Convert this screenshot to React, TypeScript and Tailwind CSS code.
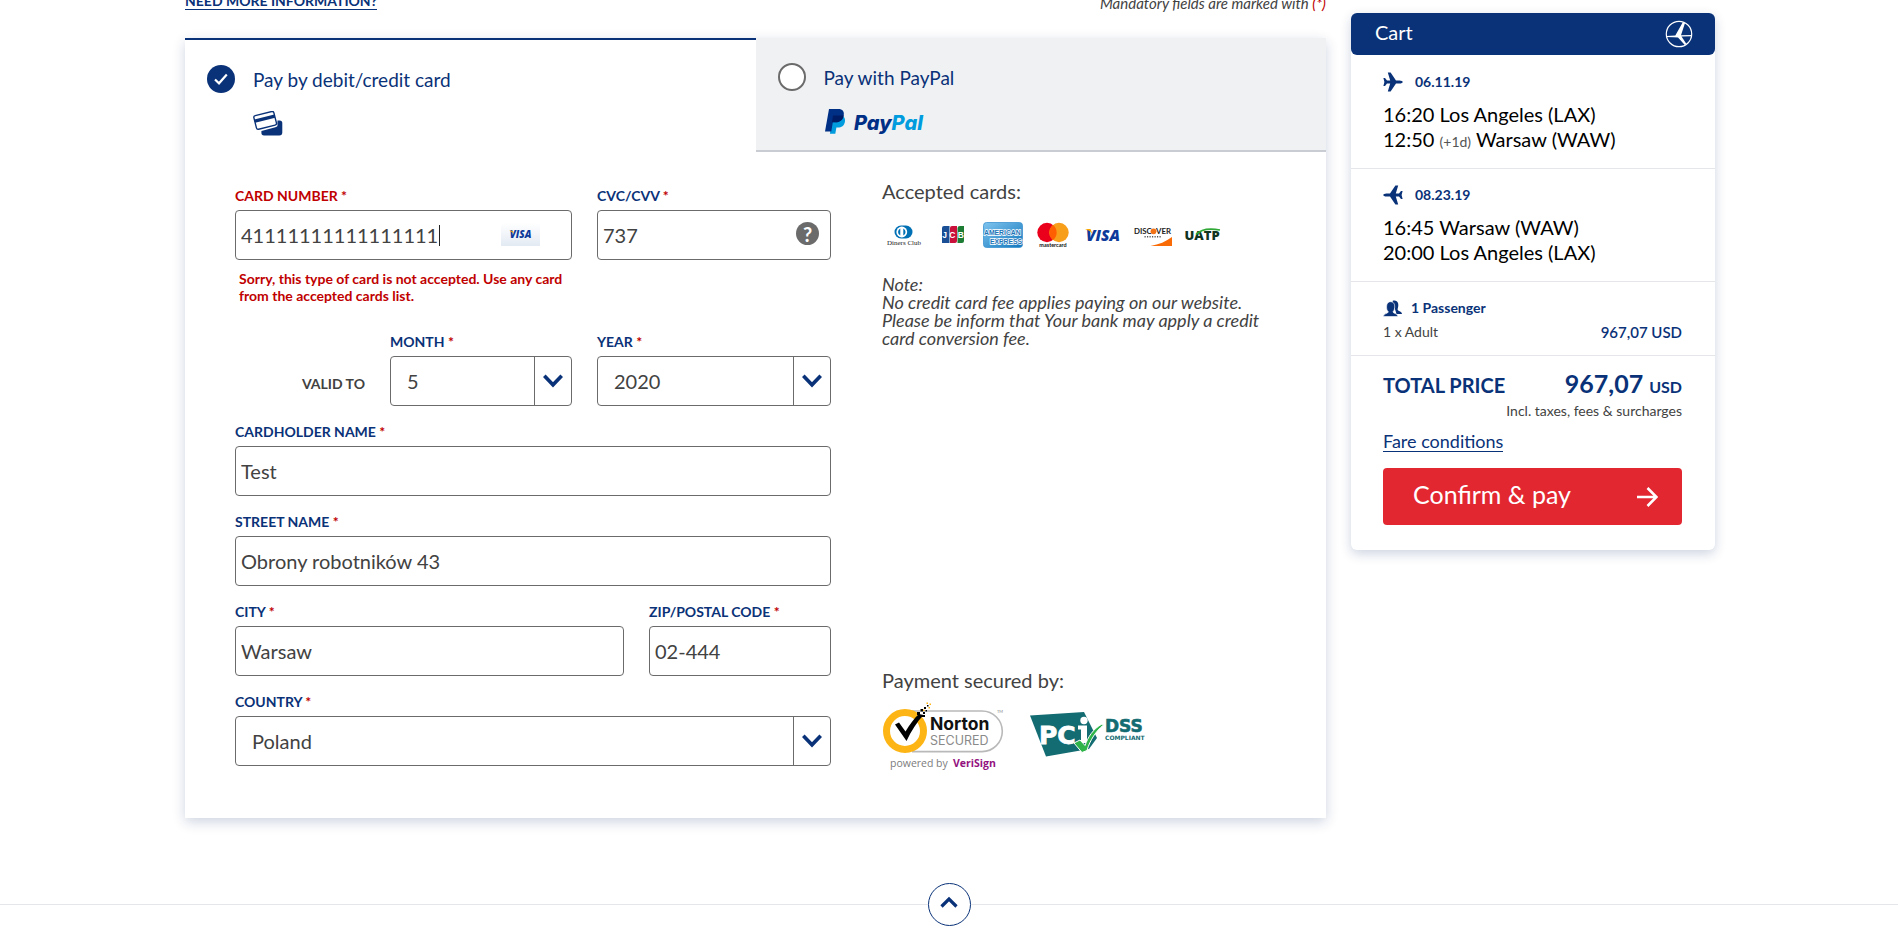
import React, { useId } from "react";

const Star = () => <span className="text-[#c00000]"> *</span>;

function Label({
  htmlFor,
  error,
  children,
}: {
  htmlFor: string;
  error?: boolean;
  children: React.ReactNode;
}) {
  return (
    <label
      htmlFor={htmlFor}
      className={
        "mb-1 block text-sm font-bold uppercase leading-5 " +
        (error ? "text-[#c00000]" : "text-[#0a3278]")
      }
    >
      {children}
      <Star />
    </label>
  );
}

function TextField({
  label,
  value,
  error,
  className,
  children,
}: {
  label: string;
  value: string;
  error?: boolean;
  className?: string;
  children?: React.ReactNode;
}) {
  const id = useId();
  return (
    <div className={className}>
      <Label htmlFor={id} error={error}>
        {label}
      </Label>
      <div className="relative">
        <input
          id={id}
          type="text"
          defaultValue={value}
          className="block h-[50px] w-full rounded border border-[#6b6b6b] bg-white px-[5px] text-xl text-[#424242] outline-none"
        />
        {children}
      </div>
    </div>
  );
}

function SelectField({
  label,
  options,
  className,
}: {
  label: string;
  options: string[];
  className?: string;
}) {
  const id = useId();
  return (
    <div className={className}>
      <Label htmlFor={id}>{label}</Label>
      <div className="relative">
        <select
          id={id}
          className="block h-[50px] w-full appearance-none rounded border border-[#6b6b6b] bg-white pl-4 pr-10 text-xl text-[#424242] outline-none"
        >
          {options.map((o) => (
            <option key={o}>{o}</option>
          ))}
        </select>
        <span className="pointer-events-none absolute inset-y-0 right-0 flex w-[38px] items-center justify-center border-l border-[#6b6b6b] pr-0.5">
          <svg viewBox="0 0 20 14" className="h-3.5 w-5" fill="none" stroke="#0a3278" strokeWidth="3.6">
            <path d="M1.3 1.8 10 10.8 18.7 1.8" />
          </svg>
        </span>
      </div>
    </div>
  );
}

function CardsIcon() {
  return (
    <svg viewBox="0 0 30 25" className="h-[25px] w-[30px]">
      <path d="M24.5 9.5h2.2a2.6 2.6 0 0 1 2.6 2.6v9.3a3 3 0 0 1-3 3H11a2.6 2.6 0 0 1-2.6-2.6v-1.9l14-3.6a2.6 2.6 0 0 0 2-3.2z" fill="#0a3278" />
      <g transform="rotate(-14 12 9.5)">
        <rect x="1.9" y="2.4" width="20.6" height="14" rx="1.8" fill="#fff" stroke="#0a3278" strokeWidth="1.4" />
        <rect x="1.9" y="6" width="20.6" height="3.4" fill="#0a3278" />
      </g>
    </svg>
  );
}

function PayPalLogo() {
  return (
    <svg viewBox="-1 0 102 26" className="h-[26px] w-[102px]" role="img" aria-label="PayPal">
      <path d="M8.2 6.5h7.4c3.4.4 5 3 4.3 6.5-.8 3.8-3.4 5.6-7 5.6h-1.5l-1.1 6.1H4.9z" fill="#009cde" />
      <path d="M4 0h9.3c4.3 0 6.2 2.500 5.400 6.500-.8 4.600-3.900 6.800-8.400 6.800H7.800l-1.500 9.100H0z" fill="#002f86" />
      <path d="M8 6.500h10.700c-.8 4.600-3.900 6.800-8.400 6.800H7z" fill="#001c64" />
      <text x="29" y="20.5" fontSize="20" fontWeight="800" fontStyle="italic" fontFamily="Inter, sans-serif">
        <tspan fill="#002f86">Pay</tspan>
        <tspan fill="#009cde">Pal</tspan>
      </text>
    </svg>
  );
}

function VisaLogo({ className }: { className: string }) {
  return (
    <svg viewBox="0 0 36 14" className={className} role="img" aria-label="Visa">
      <text x="1" y="12.5" fontSize="15.5" fontWeight="800" fontStyle="italic" fontFamily="'Open Sans', sans-serif" fill="#0e3a9a">
        VISA
      </text>
      <path d="M0 1h5.500l2 5C6 3.800 3.500 2 0 1z" fill="#f7a600" />
    </svg>
  );
}

function DinersLogo() {
  return (
    <svg viewBox="0 0 40 28" className="h-7 w-10" role="img" aria-label="Diners Club">
      <path d="M18 4.500h5a6.500 6.500 0 0 1 0 13h-5a6.500 6.500 0 0 1 0-13z" fill="#0070b5" />
      <circle cx="18.8" cy="11" r="5.4" fill="#fff" />
      <path d="M17.300 7.400v7.200a4 4 0 0 1 0-7.200zM20.300 7.400a4 4 0 0 1 0 7.200z" fill="#0070b5" />
      <text x="21" y="24" textAnchor="middle" fontSize="7" fontFamily="'Liberation Serif', serif" fill="#222">
        Diners Club
      </text>
    </svg>
  );
}

function JcbLogo() {
  return (
    <svg viewBox="0 0 40 28" className="h-7 w-10" role="img" aria-label="JCB">
      <path d="M11 5h5.500v17H9V7q0-2 2-2z" fill="#1a4f96" />
      <path d="M19 5h5v15q0 2-2 2h-5V7q0-2 2-2z" fill="#c8103a" />
      <path d="M27 5h4v15q0 2-2 2h-4.500V7q0-2 2.500-2z" fill="#1c7c34" />
      <text x="20" y="16.5" textAnchor="middle" fontSize="8.5" fontWeight="700" fontFamily="'Liberation Sans', sans-serif" fill="#fff">
        J C B
      </text>
    </svg>
  );
}

function AmexLogo() {
  return (
    <svg viewBox="0 0 40 28" className="h-7 w-10" role="img" aria-label="American Express">
      <defs>
        <linearGradient id="amex" x1="0" y1="0" x2="1" y2="1">
          <stop offset="0" stopColor="#7fc4ee" />
          <stop offset="1" stopColor="#1377bd" />
        </linearGradient>
      </defs>
      <rect x="0.5" y="1.5" width="39" height="25" rx="3" fill="url(#amex)" stroke="#3b93d0" strokeWidth="0.8" />
      <g fontSize="6.8" fontWeight="700" fontFamily="'Liberation Sans', sans-serif" fill="#1b74b8" stroke="#fff" strokeWidth="1.3" paintOrder="stroke">
        <text x="1" y="14">AMERICAN</text>
        <text x="39" y="22.5" textAnchor="end">EXPRESS</text>
      </g>
    </svg>
  );
}

function MastercardLogo() {
  return (
    <svg viewBox="0 0 40 28" className="h-7 w-10" role="img" aria-label="Mastercard">
      <circle cx="14" cy="11.5" r="9.7" fill="#eb001b" />
      <circle cx="26" cy="11.5" r="9.7" fill="#f79e1b" />
      <path d="M20 3.900a9.700 9.700 0 0 1 0 15.200 9.700 9.700 0 0 1 0-15.200z" fill="#ff5f00" />
      <text x="20" y="26" textAnchor="middle" fontSize="5.5" fontWeight="700" fontFamily="Lato, sans-serif" fill="#111">
        mastercard
      </text>
    </svg>
  );
}

function DiscoverLogo() {
  return (
    <svg viewBox="0 0 40 28" className="h-7 w-10" role="img" aria-label="Discover">
      <g fontSize="7.8" fontWeight="700" fontFamily="Lato, sans-serif" fill="#222">
        <text x="1" y="13">DISC</text>
        <text x="23" y="13">VER</text>
      </g>
      <circle cx="20.5" cy="10.3" r="2.9" fill="#f47216" />
      <path d="M11.500 15.800h17" stroke="#555" strokeWidth="1.5" strokeDasharray="1.2 1.3" />
      <path d="M39 16v9H17.500C26 23.500 33 20.500 39 16z" fill="#f96b07" />
    </svg>
  );
}

function UatpLogo() {
  return (
    <svg viewBox="0 0 40 28" className="h-7 w-10" role="img" aria-label="UATP">
      <text x="1.5" y="18.5" fontSize="13" fontWeight="800" fontFamily="'Open Sans', sans-serif" fill="#10341f">
        UATP
      </text>
      <path d="M13 13.500c5-5.500 13-6.500 24-4.500" stroke="#2fa836" strokeWidth="1.6" fill="none" />
    </svg>
  );
}

function NortonBadge() {
  return (
    <svg viewBox="0 0 124 70" className="h-[70px] w-[124px]" role="img" aria-label="Norton Secured, powered by VeriSign">
      <path d="M30 11h70a20.300 20.300 0 0 1 0 40.600H30" fill="#fff" stroke="#b9b9b9" strokeWidth="1.6" />
      <circle cx="23" cy="31" r="18.5" fill="#fff" stroke="#fdb515" strokeWidth="7" />
      <path d="M13 24.500l4-2 6.500 9C28 24 32 18.500 37 14l4.500 1C35 22 29 31 24.500 41z" fill="#000" />
      <g fill="#000">
        <path d="M35 12h3v3h-3zM38.500 9h2.500v2.500h-2.500zM41 12h2v2h-2zM37 15h6v2h-6zM42 7h2v2h-2zM43.500 10h1.500v1.500h-1.500zM45 5h1.500v1.500H45z" />
      </g>
      <g fill="#fdb515">
        <path d="M41 9.500h1.500v1.500H41zM44.500 2.500H46V4h-1.500zM46.500 7H48v1.500h-1.500zM47.500 3.500H49V5h-1.500z" />
      </g>
      <text x="48" y="30" fontSize="17.5" fontWeight="700" fontFamily="Inter, sans-serif" fill="#111">
        Norton
      </text>
      <text x="48" y="44.5" fontSize="12.5" fontFamily="Inter, sans-serif" fill="#8a8a8a">
        SECURED
      </text>
      <text x="115" y="12.5" fontSize="4" fontFamily="Lato, sans-serif" fill="#888">
        TM
      </text>
      <text x="8" y="67" fontSize="10.5" fontFamily="'Open Sans', sans-serif" fill="#7c7c7c">
        powered by
      </text>
      <text x="71" y="67" fontSize="10.5" fontWeight="700" fontFamily="'Open Sans', sans-serif" fill="#93117e">
        VeriSign
      </text>
    </svg>
  );
}

function PciBadge() {
  return (
    <svg viewBox="0 0 118 46" className="h-[46px] w-[118px]" role="img" aria-label="PCI DSS Compliant">
      <path d="M0 3.500 54 0l7 14 6 12-8 11-43 7.500z" fill="#136c72" />
      <text x="9" y="31.5" fontSize="25" fontWeight="700" fontFamily="'DejaVu Sans', sans-serif" fill="#fff" stroke="#fff" strokeWidth="0.8">
        PC
      </text>
      <path d="M48 13.500h9V31h-6V17.500h-3z" fill="#fff" />
      <circle cx="54" cy="8.5" r="3.7" fill="#fff" />
      <path d="M44 31l6-3 5 5.500C58 25 63 17 72 12l1.500 1C66 19 60 28 57 38.500l-5 2z" fill="#2fb44a" stroke="#fff" strokeWidth="1" />
      <text x="75" y="19.5" fontSize="17" fontWeight="700" fontFamily="'DejaVu Sans', sans-serif" fill="#136c72" stroke="#136c72" strokeWidth="0.6">
        DSS
      </text>
      <text x="75" y="27.5" fontSize="6" fontWeight="700" fontFamily="'DejaVu Sans', sans-serif" fill="#136c72">
        COMPLIANT
      </text>
    </svg>
  );
}

function AirlineLogo() {
  return (
    <svg viewBox="0 0 28 28" className="size-7" fill="#fff" aria-hidden="true">
      <circle cx="14" cy="14" r="12.7" fill="none" stroke="#fff" strokeWidth="1.2" />
      <path d="M17.800 2.200l2.200.700L16 15.300l10.300-.3.200 1.300-10 .2 4.800 7.200-1.500 1.300-6.800-7.500-4.500-.2-7-.2-.2-1.100 9-.5z" />
    </svg>
  );
}

function PlaneIcon({ back }: { back?: boolean }) {
  return (
    <svg viewBox="0 0 20 20" className={back ? "size-5 rotate-180" : "size-5"} fill="#0a3278" aria-hidden="true">
      <path d="M19.800 10c0 .8-1.500 1.500-3.200 1.600h-3.600L7.600 19.500H4.800l2.400-7.900H4L2 13.900H.4L1.400 10 .4 6.100H2l2 2.300h3.200L4.800.5h2.800l5.400 7.900h3.600c1.700.1 3.200.8 3.200 1.600z" />
    </svg>
  );
}

function PeopleIcon() {
  return (
    <svg viewBox="0 0 20 17" className="h-[17px] w-5" fill="#0a3278" aria-hidden="true">
      <path d="M9.500.9C11 .1 14.600.1 15.200 3.800c.4 2.600-.4 4.300-.6 5.700.1 1.800 4.200 1.500 4.400 4.500h-5.500z" />
      <path d="M.4 16.500c.1-3.300 4.900-2.700 4.900-4.700-1.300-1.300-1.900-3-1.700-5.800C3.800 3 5.600 1.700 7.700 1.700S11.600 3 11.700 6c.1 2.600-.5 4.500-1.700 5.800 0 2 4.700 1.400 4.900 4.700z" stroke="#fff" strokeWidth="0.6" />
    </svg>
  );
}

function Flight({
  date,
  back,
  children,
}: {
  date: string;
  back?: boolean;
  children: React.ReactNode;
}) {
  return (
    <section className="border-b border-[#e4e6ea] px-8 py-4">
      <div className="flex items-center gap-3 text-sm font-bold leading-5 text-[#0a3278]">
        <PlaneIcon back={back} />
        {date}
      </div>
      <div className="mt-2.5 text-xl leading-[25px] text-black">{children}</div>
    </section>
  );
}

function Cart() {
  return (
    <aside className="mt-[13px] w-[364px] shrink-0 rounded-md bg-white shadow-[0_4px_12px_rgba(10,40,100,0.2)]">
      <header className="mb-px flex h-[42px] items-center justify-between rounded-md bg-[#0a3278] pl-6 pr-[22px] text-xl text-white">
        <h2 className="pb-1">Cart</h2>
        <AirlineLogo />
      </header>
      <Flight date="06.11.19">
        <p>16:20 Los Angeles (LAX)</p>
        <p>
          12:50 <span className="text-sm text-[#555]">(+1d)</span> Warsaw (WAW)
        </p>
      </Flight>
      <Flight date="08.23.19" back>
        <p>16:45 Warsaw (WAW)</p>
        <p>20:00 Los Angeles (LAX)</p>
      </Flight>
      <section className="border-b border-[#e4e6ea] pb-[13px] pl-8 pr-[33px] pt-4">
        <div className="flex items-center gap-2 text-sm font-bold leading-5 text-[#0a3278]">
          <PeopleIcon />1 Passenger
        </div>
        <div className="mt-1 flex items-center justify-between text-sm leading-5 text-[#424242]">
          <span>1 x Adult</span>
          <span className="text-[15px] font-semibold leading-5 text-[#0a3278]">967,07 USD</span>
        </div>
      </section>
      <section className="pb-[25px] pl-8 pr-[33px] pt-[13px]">
        <div className="flex items-baseline justify-between text-[#0a3278]">
          <span className="text-xl font-bold leading-7">TOTAL PRICE</span>
          <span className="flex items-baseline gap-1.5 text-base font-bold leading-7">
            <span className="text-[25px] leading-7">967,07</span> USD
          </span>
        </div>
        <p className="text-right text-sm leading-5 text-[#424242]">Incl. taxes, fees &amp; surcharges</p>
        <a href="#fare" className="mt-2.5 inline-block border-b border-[#0a3278] text-lg leading-5 text-[#0a3278]">
          Fare conditions
        </a>
        <button
          type="button"
          className="mt-3.5 flex h-[57px] w-full items-center justify-between rounded bg-[#e32731] pb-1 pl-[30px] pr-6 text-[25px] text-white"
        >
          Confirm &amp; pay
          <svg viewBox="0 0 22 22" className="mt-1 size-[22px]" fill="none" stroke="#fff" strokeWidth="2.6">
            <path d="M1 11h19M11.500 2l9 9-9 9" />
          </svg>
        </button>
      </section>
    </aside>
  );
}

export default function App() {
  return (
    <div className="overflow-x-hidden bg-white font-[Lato,sans-serif]">
      <div className="mx-auto flex max-w-[1532px] items-start gap-[25px] pl-0.5">
        <main className="min-w-0 flex-1">
          <div className="flex h-[38px] justify-between">
            <a href="#info" className="-mt-2 h-[18px] border-b border-[#0a3278] text-sm font-bold leading-[18px] text-[#0a3278]">
              NEED MORE INFORMATION?
            </a>
            <p className="-mt-1.5 text-[15px] italic leading-[18px] text-[#424242]">
              Mandatory fields are marked with <span className="text-[#c00000]">(*)</span>
            </p>
          </div>
          <div className="bg-white shadow-[0_4px_12px_rgba(10,40,100,0.2)]">
            <div className="grid h-[114px] grid-cols-2">
              <label className="flex items-start gap-[18px] border-t-2 border-[#0a3278] pl-[22px] pt-[25px] text-[19px] text-[#0a3278]">
                <input type="radio" name="method" defaultChecked className="peer sr-only" />
                <span className="flex size-7 items-center justify-center rounded-full bg-[#0a3278]">
                  <svg viewBox="0 0 14 12" className="h-3 w-3.5" fill="none" stroke="#fff" strokeWidth="2.2">
                    <path d="M1 6.500 5 10.300 12.800 1.500" />
                  </svg>
                </span>
                <span className="flex flex-col gap-[17px] pt-px">
                  <span className="leading-7">Pay by debit/credit card</span>
                  <CardsIcon />
                </span>
              </label>
              <label className="flex items-start gap-[18px] border-b-2 border-[#c9ccd2] bg-[#f0f1f3] pl-[22px] pt-[25px] text-[19px] text-[#0a3278]">
                <input type="radio" name="method" className="peer sr-only" />
                <span className="size-7 rounded-full border-2 border-[#6b6b6b] bg-white" />
                <span className="flex flex-col gap-[17px] pt-px">
                  <span className="leading-7">Pay with PayPal</span>
                  <PayPalLogo />
                </span>
              </label>
            </div>

            <div className="flex gap-[51px] px-[50px] pb-12 pt-[27px]">
              <form className="w-[596px] shrink-0 pb-1 pt-[7px]">
                <div className="grid grid-cols-[337px_1fr] gap-x-[25px]">
                  <div>
                    <TextField label="Card number" value="41111111111111111" error>
                      <span className="absolute left-[204px] top-[15px] h-[21px] w-px bg-[#222]" />
                      <span className="absolute right-8 top-[13px] flex h-[23px] w-[39px] items-center justify-center bg-linear-to-b from-white to-[#e3eaf3]">
                        <VisaLogo className="h-[9px] w-[23px]" />
                      </span>
                    </TextField>
                    <p className="mt-2.5 pl-1 text-sm font-bold leading-[17px] text-[#c00000]">
                      Sorry, this type of card is not accepted. Use any card from the accepted cards list.
                    </p>
                  </div>
                  <TextField label="CVC/CVV" value="737">
                    <button
                      type="button"
                      aria-label="Help"
                      className="absolute right-3 top-3 flex size-[23px] items-center justify-center rounded-full bg-[#6b6b6b] text-xl font-bold text-white"
                    >
                      ?
                    </button>
                  </TextField>
                </div>

                <div className="mt-7 flex items-end gap-[25px]">
                  <span className="flex h-[50px] flex-1 items-center justify-end pt-1.5 text-sm font-bold text-[#424242]">
                    VALID TO
                  </span>
                  <SelectField label="Month" options={["5", "6", "7", "8"]} className="w-[182px]" />
                  <SelectField label="Year" options={["2020", "2021", "2022"]} className="w-[234px]" />
                </div>

                <div className="mt-4 flex flex-col gap-4">
                  <TextField label="Cardholder name" value="Test" />
                  <TextField label="Street name" value="Obrony robotników 43" />
                  <div className="flex gap-[25px]">
                    <TextField label="City" value="Warsaw" className="flex-1" />
                    <TextField label="Zip/postal code" value="02-444" className="w-[182px]" />
                  </div>
                  <SelectField label="Country" options={["Poland", "United States"]} />
                </div>
              </form>

              <div className="flex min-w-0 flex-1 flex-col justify-between">
                <section className="text-[#424242]">
                  <h3 className="text-xl leading-6">Accepted cards:</h3>
                  <div className="mt-[18px] flex gap-[10px] pl-px">
                    <DinersLogo />
                    <JcbLogo />
                    <AmexLogo />
                    <MastercardLogo />
                    <span className="flex h-7 w-10 items-center justify-center">
                      <VisaLogo className="h-3.5 w-9" />
                    </span>
                    <DiscoverLogo />
                    <UatpLogo />
                  </div>
                  <p className="mt-[26px] max-w-[380px] text-lg italic leading-[18px]">
                    Note:
                    <br />
                    No credit card fee applies paying on our website. Please be inform that Your bank may apply a credit card conversion fee.
                  </p>
                </section>
                <section className="text-[#424242]">
                  <h3 className="text-xl leading-6">Payment secured by:</h3>
                  <div className="mt-2 flex items-start gap-6">
                    <NortonBadge />
                    <span className="pt-3">
                      <PciBadge />
                    </span>
                  </div>
                </section>
              </div>
            </div>
          </div>
        </main>
        <Cart />
      </div>

      <footer className="mt-[65px] flex h-[43px] items-center">
        <span className="h-px flex-1 bg-[#e4e6ea]" />
        <button
          type="button"
          aria-label="Back to top"
          className="flex size-[43px] items-center justify-center rounded-full border border-[#0a3278] bg-white pb-1.5"
        >
          <svg viewBox="0 0 18 12" className="h-3 w-[18px]" fill="none" stroke="#0a3278" strokeWidth="3.2">
            <path d="M1.500 10.500 9 3l7.500 7.500" />
          </svg>
        </button>
        <span className="h-px flex-1 bg-[#e4e6ea]" />
      </footer>
    </div>
  );
}
